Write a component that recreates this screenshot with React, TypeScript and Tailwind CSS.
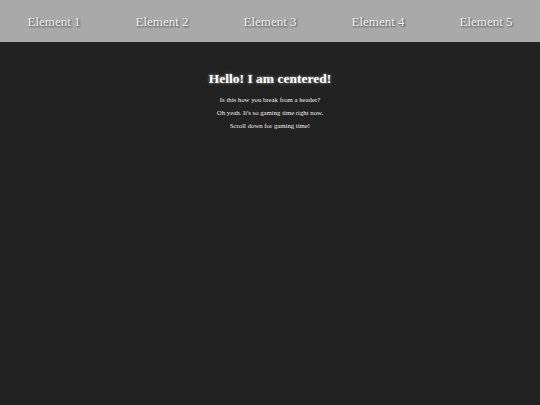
import React from "react";

export default function App() {
  const items = ["Element 1", "Element 2", "Element 3", "Element 4", "Element 5"];
  return (
    <div className="min-h-[405px] w-full bg-[#222222] font-['Liberation_Serif',serif]">
      <header className="grid h-[42px] grid-cols-5 bg-[#a9a9a9]">
        {items.map((t) => (
          <div
            key={t}
            className="flex items-center justify-center text-[13px] leading-none text-[#f2f2f2] [text-shadow:1px_1px_2px_#444]"
          >
            {t}
          </div>
        ))}
      </header>
      <main className="flex flex-col items-center pt-[29px]">
        <h1 className="text-[13.5px] font-bold leading-[16px] text-white [text-shadow:0_0_3px_#aaa]">
          Hello! I am centered!
        </h1>
        <div className="mt-[6px] flex flex-col items-center text-[6.75px] leading-[13px] text-[#f0f0f0]">
          <p>Is this how you break from a header?</p>
          <p>Oh yeah. It's so gaming time right now.</p>
          <p>Scroll down for gaming time!</p>
        </div>
      </main>
    </div>
  );
}
